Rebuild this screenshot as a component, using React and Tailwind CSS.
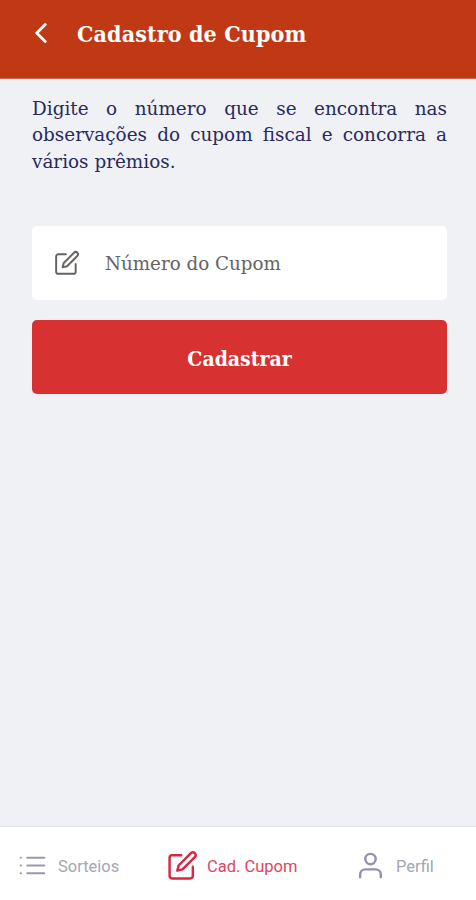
import { FiChevronLeft, FiEdit, FiList, FiUser } from "react-icons/fi";

const slab = "font-['Roboto_Slab','DejaVu_Serif',serif]";
const slabHeading = "font-['Roboto_Slab','DejaVu_Serif_Condensed','DejaVu_Serif',serif] font-stretch-condensed font-bold";

export default function App() {
  return (
    <div className="flex h-[900px] w-[476px] flex-col overflow-hidden bg-[#eff1f5] font-[Roboto,sans-serif]">
      <header className="flex h-[79px] shrink-0 items-start border-b border-[#c96a50] bg-[#c13815] pl-6 text-white">
        <FiChevronLeft size={34} className="mt-[15.5px]" />
        <h1 className={`${slabHeading} mt-[18px] ml-[19px] text-[23px] leading-8 tracking-[0.12px] whitespace-nowrap`}>
          Cadastro de Cupom
        </h1>
      </header>

      <main className="flex flex-1 flex-col px-8 pt-[17px]">
        <p className={`${slab} w-[415px] text-justify text-[18.4px] leading-[26.3px] text-[#29295c]`}>
          Digite o número que se encontra nas observações do cupom fiscal e concorra a vários prêmios.
        </p>
        <label className="mt-[51.5px] flex h-[74px] w-[415px] items-center rounded-[5px] bg-white pl-[22px] text-[#66635f]">
          <FiEdit size={26} strokeWidth={1.8} />
          <span className={`${slab} ml-[25px] text-[18.3px] whitespace-nowrap`}>Número do Cupom</span>
        </label>
        <button className={`${slabHeading} mt-5 h-[74px] w-[415px] rounded-[5px] bg-[#d83131] pt-[3px] text-[21px] text-white`}>
          Cadastrar
        </button>
      </main>

      <nav className="flex h-[74px] shrink-0 items-start border-t border-[#e2e3e6] bg-white pt-[24px] pl-[17px] text-[16.5px] leading-8 text-[#a5a5b4]">
        <div className="flex w-[150px] items-center">
          <FiList size={31} strokeWidth={1.7} className="-mt-1 text-[#9797ad]" />
          <span className="ml-[10px]">Sorteios</span>
        </div>
        <div className="flex w-[188px] items-center text-[#e04560]">
          <FiEdit size={31} strokeWidth={1.9} className="-mt-1 text-[#dc2443]" />
          <span className="ml-[9px]">Cad. Cupom</span>
        </div>
        <div className="flex items-center">
          <FiUser size={31} strokeWidth={1.9} className="-mt-1 text-[#9292aa]" />
          <span className="ml-[10px]">Perfil</span>
        </div>
      </nav>
    </div>
  );
}
